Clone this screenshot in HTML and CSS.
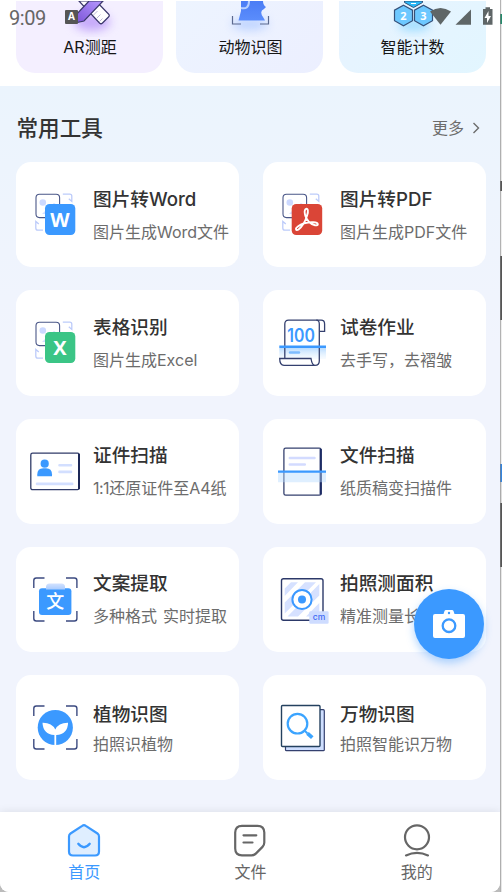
FILE: index.html
```html
<!DOCTYPE html>
<html lang="zh-CN">
<head>
<meta charset="utf-8">
<title>常用工具</title>
<link rel="stylesheet" href="styles.css">
</head>
<body>
<svg class="defs" width="0" height="0" aria-hidden="true">
  <defs>
    <linearGradient id="fade" x1="0" y1="0" x2="0" y2="1"><stop offset="0" stop-color="#b9dcff"/><stop offset="1" stop-color="#e6f3ff" stop-opacity=".3"/></linearGradient>
    <linearGradient id="clip" x1="0" y1="0" x2="0" y2="1"><stop offset="0" stop-color="#d3e2ff"/><stop offset="1" stop-color="#a9ccff"/></linearGradient>
    <linearGradient id="violet" x1="0" y1="1" x2="1" y2="0"><stop offset="0" stop-color="#7d55d8"/><stop offset="1" stop-color="#b79aff"/></linearGradient>
    <linearGradient id="dog" x1="0" y1="0" x2="0" y2="1"><stop offset="0" stop-color="#4b7df5"/><stop offset="1" stop-color="#5b8dfc"/></linearGradient>
    <g id="photo-swap">
      <rect x="9" y="8.2" width="23.6" height="23.4" rx="3.5" fill="#fff" stroke="#4a5788" stroke-width="1.1"/>
      <circle cx="15.8" cy="16.5" r="3.3" fill="#ccd9ff"/>
      <path d="M15 28l8-8 4-3 5 3v8z" fill="#d5dfff"/>
      <path d="M35.8 8.2h7q2 0 2 2v5.2l-3-2.6M16 44.2h-5q-2.200 0-2.200-2.200v-6.500l3 2.600" fill="none" stroke="#bccbfa" stroke-width="1.300"/>
    </g>
    <path id="corners" d="M6.800 17V9.500q0-2.500 2.500-2.500h8.200M39 7h8.400q2.500 0 2.500 2.500V17M49.900 40v7.500q0 2.500-2.500 2.500H39M17.500 50H9.300q-2.500 0-2.500-2.500V40" fill="none" stroke="#3b4a80" stroke-width="1.400"/>
  </defs>
</svg>
<div class="window">
  <div class="phone">
    <header class="status">
      <span class="clock">9:09</span>
      <span class="notice">A</span>
      <svg class="signals" width="66" height="20" viewBox="0 0 66 20">
        <path d="M3 4.500Q13.500 -2.500 24 4.500L13.500 17.800z" fill="#5f6667"/>
        <path d="M44 2.500v15.300H28.500z" fill="#5f6667"/>
        <path d="M56 2h2.500V.3h4.500V2H65.500v15.800H56z" fill="#5f6667"/>
        <path d="M61.500 4l-4 7H60v5l4-7h-2.500z" fill="#fff"/>
      </svg>
    </header>

    <section class="featured">
      <div class="feature violet">
        <svg width="80" height="36" viewBox="0 0 80 36">
          <ellipse class="glow" cx="42" cy="21" rx="18" ry="9" fill="#c5a9fa"/>
          <path d="M29 0L49.500 22q1.500 1.500 3 0l6-6q1.500-1.500 0-3L46 0z" fill="#fff" stroke="#3a376b" stroke-width="1.200"/>
          <path d="M46.500 17.500l4-4M49.500 20.500l3-3M43.500 14l4-4" stroke="#bdb7d8"/>
          <path d="M53 0L34 20l-7 1.500 .3-9L39 0z" fill="url(#violet)" stroke="#3a376b" stroke-width="1.200"/>
        </svg>
        <span>AR测距</span>
      </div>
      <div class="feature blue">
        <svg width="80" height="36" viewBox="0 0 80 36">
          <ellipse class="glow" cx="40" cy="23" rx="18" ry="6" fill="#bcd2ff"/>
          <path d="M31 0h22q0 4 3 6l-2 2q-5 2-1 8l2 3.500H28.500L31 10z" fill="url(#dog)"/>
          <path d="M31 7q8 2 8-7" fill="none" stroke="#b7d0ff" stroke-width="2"/>
          <path d="M22.500 15v8H31M50 23h8.500v-8" fill="none" stroke="#5b698f" stroke-width="1.200"/>
        </svg>
        <span>动物识图</span>
      </div>
      <div class="feature cyan">
        <svg width="80" height="36" viewBox="0 0 80 36">
          <ellipse class="glow" cx="41" cy="24" rx="16" ry="6" fill="#9edcff"/>
          <path d="M31.500 0v1.500l9 5 9-5V0z" fill="#29b8f7" stroke="#35517a"/>
          <g fill="#6dc8ff" stroke="#35517a" stroke-width="1.200"><path d="M30.500 4.200l9 5v10.500l-9 5-9-5V9.200z"/><path d="M50.500 4.200l9 5v10.500l-9 5-9-5V9.200z"/></g>
          <g class="digit"><text x="30.500" y="18.500">2</text><text x="50.500" y="18.500">3</text></g>
          <path d="M38 2.500h5" stroke="#fff"/>
        </svg>
        <span>智能计数</span>
      </div>
    </section>

    <main class="tools">
      <div class="heading">
        <h1>常用工具</h1>
        <a class="more">更多<svg width="8" height="12" viewBox="0 0 8 12"><path d="M1.500 1l5 5-5 5" fill="none" stroke="#6c6c6c" stroke-width="1.400"/></svg></a>
      </div>
      <div class="grid">
        <article class="card">
          <svg class="icon" viewBox="0 0 56 56"><use href="#photo-swap"/><rect x="18" y="18" width="30.300" height="31" rx="4.500" fill="#3b99ff"/><text class="letter" x="33" y="40.500">W</text></svg>
          <div class="copy"><h2>图片转Word</h2><p>图片生成Word文件</p></div>
        </article>
        <article class="card">
          <svg class="icon" viewBox="0 0 56 56"><use href="#photo-swap"/><rect x="17.700" y="18" width="30.500" height="31" rx="4.500" fill="#da4537"/><path d="M31.500 23.200c2.500-1.800 3.200 2 1.500 6.500-1.500 5-5 11-8.500 13.700-2.500 1.800-3.800-.8-.7-3 4-3 10-4.400 15.700-4.200 5.500.2 5.500 3.800 1.500 3.100-4.500-.8-8.500-5.300-9.700-9.500-.8-3-1-5.500.2-6.600z" fill="none" stroke="#fff" stroke-width="1.900"/></svg>
          <div class="copy"><h2>图片转PDF</h2><p>图片生成PDF文件</p></div>
        </article>
        <article class="card">
          <svg class="icon" viewBox="0 0 56 56"><use href="#photo-swap"/><rect x="18" y="18" width="30.300" height="31" rx="4.500" fill="#3bc586"/><text class="letter" x="33" y="40.700">X</text></svg>
          <div class="copy"><h2>表格识别</h2><p>图片生成Excel</p></div>
        </article>
        <article class="card">
          <svg class="icon" viewBox="0 0 56 56"><rect x="5.300" y="34" width="46.700" height="11" fill="url(#fade)"/><g fill="none" stroke="#34406f" stroke-width="1.300"><path d="M10.800 44V10q0-3.800 3.800-3.800h32.500q3.500 0 3.500 3.800v7.300h-5.300"/><path d="M45.300 17.300V10q0-3.800-3-3.800M45.300 17v30q0 4.300-4.300 4.300H10q-4.300 0-4.300-6.800H37q1 6.800 4 6.800"/></g><text class="score" x="13.300" y="28" textLength="27.500" lengthAdjust="spacingAndGlyphs">100</text><path d="M5.300 32.800H52" stroke="#3b99ff" stroke-width="2.400"/><path d="M16 38.500h9" stroke="#7dbcff" stroke-width="2.400" stroke-linecap="round"/></svg>
          <div class="copy"><h2>试卷作业</h2><p>去手写，去褶皱</p></div>
        </article>
        <article class="card">
          <svg class="icon" viewBox="0 0 56 56"><rect x="3.800" y="10.200" width="48.500" height="36.500" rx="1.800" fill="#fff" stroke="#303b68" stroke-width="1.300"/><path d="M52 11v35" stroke="#1d2857" stroke-width="2"/><circle cx="17.700" cy="20.700" r="4.100" fill="#3b99ff"/><path d="M10.300 33.300v-2q0-6 6-6H19q6 0 6 6v2z" fill="#3b99ff"/><path d="M32.500 22.200h11.500M32.500 28.900h11.500M10 40.900h35.200" stroke="#d3dfff" stroke-width="2.600" stroke-linecap="round"/></svg>
          <div class="copy"><h2>证件扫描</h2><p><span class="ratio">1:1</span>还原证件至A4纸</p></div>
        </article>
        <article class="card">
          <svg class="icon" viewBox="0 0 56 56"><rect x="9.900" y="5.200" width="37.200" height="47" rx="1.800" fill="#fff" stroke="#34406f" stroke-width="1.300"/><path d="M46.700 6v45.500" stroke="#1d2b65" stroke-width="2.200"/><path d="M15.800 14.900h24.700M15.800 21.600h15" stroke="#d3dbff" stroke-width="2.500" stroke-linecap="round"/><path d="M4 29h48v10.300H4z" fill="#b9dcff" opacity=".45"/><path d="M4 28.600h48" stroke="#3b99ff" stroke-width="2.300"/></svg>
          <div class="copy"><h2>文件扫描</h2><p>纸质稿变扫描件</p></div>
        </article>
        <article class="card">
          <svg class="icon" viewBox="0 0 56 56"><use href="#corners"/><rect x="12" y="17.200" width="32.400" height="26.800" rx="3" fill="#3b99ff"/><path d="M19 18.500v-2.500q0-3.500 3.500-3.500h12q3.500 0 3.500 3.500v2.500z" fill="url(#clip)"/><text class="wen" x="28.300" y="37">文</text></svg>
          <div class="copy"><h2>文案提取</h2><p class="split"><span>多种格式</span><span>实时提取</span></p></div>
        </article>
        <article class="card">
          <svg class="icon" viewBox="0 0 56 56"><rect x="7.500" y="7.800" width="41.500" height="41.500" rx="2" fill="#fff" stroke="#2c3969" stroke-width="1.400"/><path d="M17 11.300h7L10.700 25v-7.500zM31 11.300h11L10.700 42.500V31.500zM45.300 13v11.500L24 45.500H13.500zM45.300 32v8L40 45.500h-8z" fill="#d6e1ff"/><circle cx="28" cy="28.500" r="9.600" fill="#fff" stroke="#3b99ff" stroke-width="2"/><circle cx="28" cy="28.500" r="4" fill="#3b99ff"/><rect x="35.300" y="40.200" width="19.300" height="12.500" rx="1.200" fill="#cedcff"/><text class="unit" x="45" y="48.800">cm</text></svg>
          <div class="copy"><h2>拍照测面积</h2><p>精准测量长度</p></div>
        </article>
        <article class="card low">
          <svg class="icon" viewBox="0 0 56 56"><use href="#corners"/><circle cx="28.300" cy="28.500" r="17.600" fill="#3b99ff"/><path d="M28.300 30.500Q25 23.500 15.500 23.700q.5 11.500 11.900 12.300v10.200h1.800V36q11.500-.8 11.900-12.300-9.600-.2-12.800 6.800z" fill="#fff"/></svg>
          <div class="copy"><h2>植物识图</h2><p>拍照识植物</p></div>
        </article>
        <article class="card low">
          <svg class="icon" viewBox="0 0 56 56"><rect x="11.500" y="10.700" width="38.800" height="41" rx="1" fill="#cfdfff" stroke="#34406f" stroke-width="1.200"/><rect x="7.500" y="6.500" width="38.500" height="41" rx="1" fill="#fff" stroke="#24415f" stroke-width="1.400"/><circle cx="23.500" cy="24.700" r="9.800" fill="none" stroke="#3ba4ff" stroke-width="2.200"/><path d="M31 32l2.500 2.500" stroke="#3ba4ff" stroke-width="2"/><path d="M33.500 34.300l4.800 4.300" stroke="#3ba4ff" stroke-width="3.800"/></svg>
          <div class="copy"><h2>万物识图</h2><p>拍照智能识万物</p></div>
        </article>
      </div>
    </main>

    <button class="fab" aria-label="拍照"><svg width="34" height="30" viewBox="0 0 34 30"><path d="M11.500 5l1-3q.3-1 1.500-1h6q1.200 0 1.500 1l1 3h8.500q2 0 2 2v20q0 2-2 2H3q-2 0-2-2V7q0-2 2-2z" fill="#fff"/><circle cx="17" cy="16.700" r="6.300" fill="none" stroke="#3b99ff" stroke-width="2.300"/><circle cx="17" cy="4" r="1.200" fill="#3b99ff"/></svg></button>

    <nav class="tabs">
      <a class="tab active"><svg width="36" height="36" viewBox="0 0 36 36"><path d="M16.200 2.800q1.800-1.300 3.600 0L31.500 10.500q1.500 1 1.500 3V28.500q0 4-4 4H7q-4 0-4-4V13.500q0-2 1.500-3z" fill="#dfeeff" stroke="#3b99ff" stroke-width="2.200"/><path d="M12.300 20.800q5.700 6.800 11.400 0" fill="none" stroke="#3b99ff" stroke-width="2.400" stroke-linecap="round"/></svg><span>首页</span></a>
      <a class="tab"><svg width="36" height="36" viewBox="0 0 36 36"><path d="M10 2.800h15.500q6.800 0 6.800 6.800v10q0 2.500-1.800 4.300l-6.700 6.700q-1.800 1.800-4.300 1.800H10q-6.800 0-6.800-6.800V9.600q0-6.800 6.800-6.800z" fill="none" stroke="#666" stroke-width="2.200"/><path d="M11.500 12.300h12.800M11.500 19.500h9" stroke="#666" stroke-width="2.200" stroke-linecap="round"/></svg><span>文件</span></a>
      <a class="tab"><svg width="36" height="36" viewBox="0 0 36 36"><circle cx="18" cy="14.300" r="12" fill="none" stroke="#666" stroke-width="2.200"/><path d="M7 32.400q11-5 22 0" fill="none" stroke="#666" stroke-width="2.200" stroke-linecap="round"/></svg><span>我的</span></a>
    </nav>
  </div>
  <div class="edge"></div>
</div>
</body>
</html>
```

FILE: styles.css
```css
* { box-sizing: border-box; }
body { margin: 0; font-family: "Inter", "Noto Sans CJK SC", sans-serif; color: #333; overflow: hidden; }
.defs { position: absolute; }
.window { display: flex; width: 502px; height: 892px; background: #bbb; }
.phone { position: relative; display: flex; flex-direction: column; flex: none; width: 500px; height: 892px; border-radius: 0 0 9px 9px; overflow: hidden; background: #fff; }
.edge { flex: none; width: 2px; border-left: 1px solid rgba(130, 130, 130, .55); background: linear-gradient(#f2f2f2 0 14px, #238b6c 14px 24px, #e7e7e7 24px 181px, #555 181px 191px, #eee 191px 256px, #555 256px 320px, #eee 320px 464px, #3585df 464px 482px, #ddd 482px 503px, #555 503px 567px, #e7e7e7 567px); }

.status { position: absolute; z-index: 3; inset: 0 0 auto 0; height: 34px; display: flex; align-items: center; padding: 0 7px 0 9px; color: #666; }
.clock { width: 56px; padding-top: 1px; font: 20px/34px Roboto, sans-serif; letter-spacing: -.4px; }
.notice { width: 13px; height: 14px; background: #555; border-radius: 1px; color: #fff; font: bold 10px/13px "Open Sans", sans-serif; text-align: center; }
.signals { margin-left: auto; }

.featured { display: flex; gap: 13px; height: 86px; padding: 1px 14px 0 16px; flex: none; background: #fff; }
.feature { display: flex; flex-direction: column; align-items: center; width: 147px; height: 72px; border-radius: 0 0 19px 19px; font-size: 16px; line-height: 24px; color: #161616; }
.feature svg { flex: none; margin-bottom: -2px; }
.feature.violet { background: #f4efff; }
.feature.violet span { padding-left: 1px; }
.feature.blue { background: linear-gradient(135deg, #edf4ff, #ecefff); }
.feature.blue span { padding-left: 2px; }
.feature.cyan { margin-left: 3px; background: linear-gradient(135deg, #e8f3ff, #e2f6ff); }
.glow { filter: blur(5px); }
.digit { font: bold 11px "Open Sans", sans-serif; fill: #fff; text-anchor: middle; }

.tools { flex: 1; padding: 0 14px 0 16px; background: linear-gradient(#ebf4fd 0, #eef4fd 120px, #f1f4fd 260px); }
.heading { display: flex; justify-content: space-between; align-items: center; height: 76px; padding: 7px 6px 0 0.5px; }
h1 { margin: 0; font-size: 21.6px; line-height: 30px; font-weight: 500; color: #333; }
.more { display: flex; align-items: center; gap: 8px; font-size: 16px; line-height: 24px; color: #6c6c6c; }
.grid { display: grid; grid-template-columns: 223px 223px; justify-content: space-between; gap: 23px 0; grid-auto-rows: 105.25px; }
.card { display: flex; gap: 10px; padding-left: 11px; background: #fff; border-radius: 15px; overflow: hidden; }
.icon { flex: none; width: 56px; height: 56px; margin-top: 24px; }
.copy { padding-top: 24.6px; white-space: nowrap; }
h2 { margin: 0; font-size: 18.67px; line-height: 26px; font-weight: 500; color: #333; }
p { margin: 7px 0 0; font-size: 16px; line-height: 24px; color: #6c6c6c; }
.low .copy { padding-top: 27px; }
.low p { margin-top: 4.4px; }
.ratio { letter-spacing: -.5px; }
.split { display: flex; gap: 6px; }
.letter { font: bold 20px "Open Sans", sans-serif; fill: #fff; text-anchor: middle; }
.score { font: 600 18px Inter, sans-serif; fill: #3b99ff; }
.wen { font: 500 18px "Noto Sans CJK SC", sans-serif; fill: #fff; text-anchor: middle; }
.unit { font: 500 8.5px Inter, sans-serif; fill: #4169f5; text-anchor: middle; }

.fab { position: absolute; z-index: 2; left: 413.7px; top: 589.4px; width: 70px; height: 70px; display: flex; align-items: center; justify-content: center; padding: 0 0 0 1px; border: 0; border-radius: 50%; background: #3b99ff; box-shadow: 0 4px 8px rgba(59, 153, 255, .4); }

.tabs { position: relative; display: flex; flex: none; height: 80px; padding-left: 1px; background: #fff; box-shadow: 0 -1px 8px rgba(0, 0, 0, .08); }
.tab { flex: 1; display: flex; flex-direction: column; align-items: center; padding-top: 10.5px; font-size: 16px; line-height: 24px; color: #666; }
.tab span { margin-top: 1.5px; }
.tab.active { color: #3b99ff; }
```
